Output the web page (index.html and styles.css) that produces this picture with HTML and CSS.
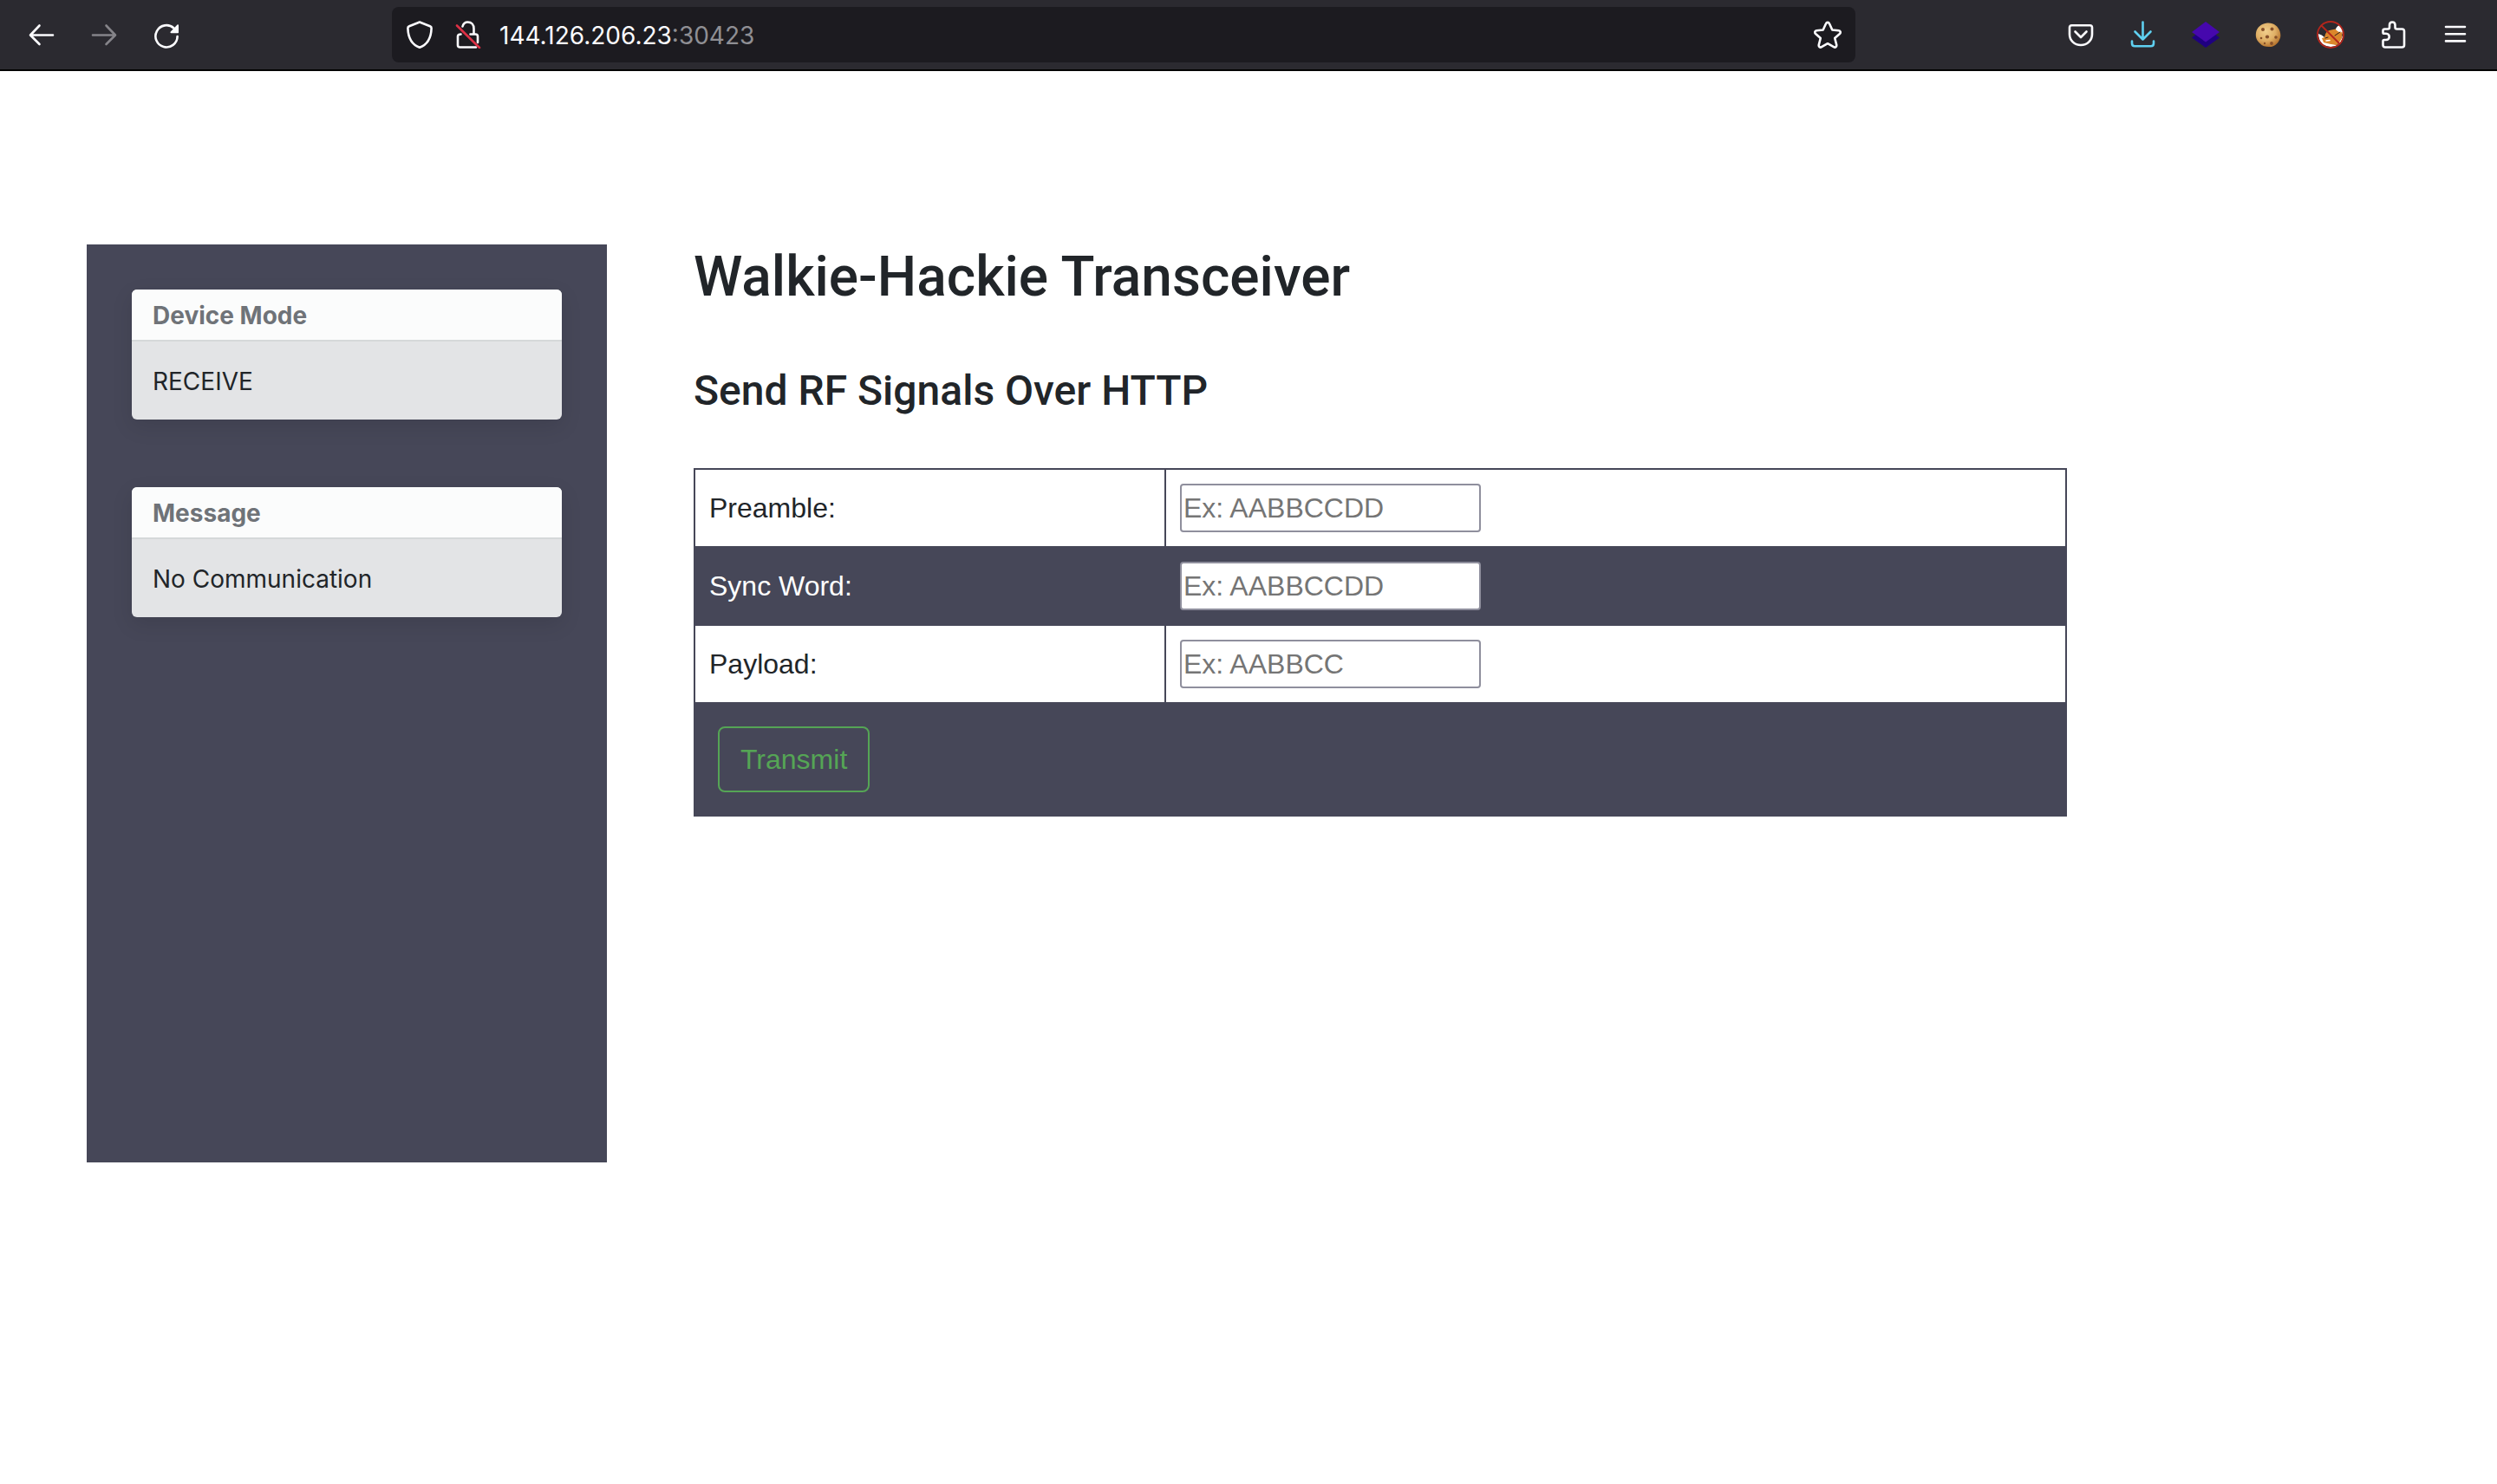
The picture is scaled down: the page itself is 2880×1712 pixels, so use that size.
FILE: index.html
```html
<!DOCTYPE html>
<html lang="en">
<head>
<meta charset="utf-8">
<meta name="viewport" content="width=device-width, initial-scale=1">
<title>Walkie-Hackie Transceiver</title>
<link rel="stylesheet" href="styles.css">
</head>
<body>
<header class="toolbar">
  <nav class="tools" aria-label="History">
    <button class="tool" type="button" aria-label="Back">
      <svg class="icon" viewBox="0 0 32 32"><path d="M29 16.500H4M13.500 5.500L3 16.500L13.500 27" /></svg>
    </button>
    <button class="tool tool-dim" type="button" aria-label="Forward">
      <svg class="icon" viewBox="0 0 32 32"><path d="M3 16.500H28M18.500 5.500L29 16.500L18.500 27" /></svg>
    </button>
    <button class="tool" type="button" aria-label="Reload">
      <svg class="icon" viewBox="0 0 32 32"><path d="M28.600 18A12.600 12.600 0 1 1 24.500 8.500" /><path class="solid" d="M30 5.200V13.500a.8.8 0 0 1-.8.800H21.500c-1.100 0-1.400-1-.7-1.700L28.500 4.600c.7-.6 1.500-.3 1.500.600z" /></svg>
    </button>
  </nav>
  <div class="address">
    <div class="site">
      <svg class="icon" viewBox="0 0 32 32"><path d="M16 1.500L28 6.200C29.200 6.700 29.700 7.500 29.600 8.700C29.300 18.500 26 27 16 30.800C6 27 2.700 18.500 2.400 8.700C2.300 7.500 2.800 6.700 4 6.200Z" /></svg>
      <svg class="icon" viewBox="0 0 32 32"><path d="M9.500 6.500C10.500 3 13 1.500 15.500 1.500C20 1.500 22.500 4.500 22.500 9V14.500M7.500 15.500Q4 15.500 4 18V28Q4 30.500 6.500 30.500H25M18.500 15.500H24.500Q27 15.500 27 18V25" /><path class="slash" d="M3 5.500L29 31" /></svg>
    </div>
    <div class="url" role="textbox" contenteditable="true" spellcheck="false" aria-label="Address"><span class="host">144.126.206.23</span>:30423</div>
    <button class="star" type="button" aria-label="Bookmark this page">
      <svg class="icon" viewBox="0 0 32 32"><path d="M14 3.300C14.800 1.400 17.200 1.400 18 3.300L21.300 10.500L28.800 11.300C30.800 11.600 31.400 13.600 29.900 15L24.200 20L26.200 27.700C26.600 29.900 24.800 31.200 23 30.200L16 26.200L9 30.200C7.200 31.200 5.400 29.900 5.800 27.700L7.800 20L2.100 15C.600 13.600 1.200 11.600 3.200 11.300L10.700 10.500Z" /></svg>
    </button>
  </div>
  <nav class="tools" aria-label="Extensions">
    <button class="tool" type="button" aria-label="Save to Pocket">
      <svg class="icon" viewBox="0 0 32 32"><path d="M5.500 5.200H26.500Q29 5.200 29 7.700V15.500C29 22.500 23.500 28 16 28C8.500 28 3 22.500 3 15.500V7.700Q3 5.200 5.500 5.200ZM9.500 12.500L16 19L22.500 12.500" /></svg>
    </button>
    <button class="tool tool-active" type="button" aria-label="Downloads">
      <svg class="icon" viewBox="0 0 32 32"><path d="M15.500 1.500V21.500M6.500 12.500L15.500 21.500L24.500 12.500M3 23.500V26Q3 29.200 6.200 29.200H24.800Q28 29.200 28 26V23.500" /></svg>
    </button>
    <button class="tool" type="button" aria-label="Wappalyzer">
      <svg class="icon" viewBox="0 0 32 32"><path fill="#1f0080" stroke="none" d="M0 19.500L5 15.500H27L32 19.500L16 31Z" /><path fill="#4608ad" stroke="none" d="M16 1L32 13L16 24.500L0 13Z" /></svg>
    </button>
    <button class="tool" type="button" aria-label="Cookie editor">
      <svg class="icon" viewBox="0 0 32 32">
        <defs><radialGradient id="cookie" cx=".4" cy=".35" r=".65"><stop offset="0" stop-color="#f2cf8c" /><stop offset=".6" stop-color="#dfaf66" /><stop offset="1" stop-color="#b97832" /></radialGradient></defs>
        <path fill="url(#cookie)" stroke="none" d="M15 2.500C22 1.800 27.500 6 29.500 12C30.500 15 31 19 29 22C27 27 22 30.500 17 30C13 30 9 29 6.500 26C3 23 1.200 19 2 14C2.800 8 8 3 15 2.500Z" />
        <g stroke="none" fill="#875029"><circle cx="10" cy="10" r="2" /><circle cx="20.500" cy="9.500" r="2" /><circle cx="15" cy="18.500" r="2.100" /><circle cx="25" cy="19" r="1.800" /><circle cx="8" cy="20" r="1.300" /><circle cx="20" cy="26" r="1.900" /><circle cx="12" cy="26" r="1.200" /></g>
      </svg>
    </button>
    <button class="tool" type="button" aria-label="FoxyProxy, disabled">
      <svg class="icon" viewBox="0 0 32 32">
        <path fill="#fff" stroke="none" d="M2 15Q6 16 9 19L12 25L24 28L30 17Q30 22 26 27Q16 33 7 27Q2 22 2 15ZM26 5Q21 8 22 12L29.500 15Q31 9 26 5Z" />
        <path fill="#db872c" stroke="none" d="M9 19Q10 11 17 10.500L21.500 9.500Q25 14 29.500 13Q30 20 26 25L23 28Q15 27 8 25L6 20Z" />
        <path stroke="#30201a" stroke-width="1" d="M10 20L13 19M21 17L27 13" />
        <path stroke="#fff" stroke-width="1.600" d="M11 23L15 22.500" />
        <circle cx="16" cy="16" r="15" stroke="#b3261c" stroke-width="1.800" />
        <path stroke="#b3261c" stroke-width="2" d="M5.500 5.500L26.500 26.500" />
      </svg>
    </button>
    <button class="tool" type="button" aria-label="Extensions">
      <svg class="icon" viewBox="0 0 32 32"><path d="M6.500 9.500H10Q12 9.500 12 7.500V5C12 .300 18.500 .300 18.500 5V7.500Q18.500 9.500 20.500 9.500H26.500Q29 9.500 29 12V28Q29 30.500 26.500 30.500H7Q4.500 30.500 4.500 28V23.500Q4.500 22 6 22H8C13 22 13 14.800 8 14.800H6Q4.500 14.800 4.500 13.500V11.500Q4.500 9.500 6.500 9.500Z" /></svg>
    </button>
    <button class="tool" type="button" aria-label="Menu">
      <svg class="icon" viewBox="0 0 32 32"><path d="M5 7H27M5 15.200H27M5 23.400H27" /></svg>
    </button>
  </nav>
</header>
<main class="page">
  <aside class="sidebar">
    <section class="card">
      <h2 class="card-title">Device Mode</h2>
      <p class="card-text">RECEIVE</p>
    </section>
    <section class="card">
      <h2 class="card-title">Message</h2>
      <p class="card-text">No Communication</p>
    </section>
  </aside>
  <div class="content">
    <h1 class="title">Walkie-Hackie Transceiver</h1>
    <h2 class="subtitle">Send RF Signals Over HTTP</h2>
    <form>
      <table class="fields">
        <tr><td class="name"><label for="pa">Preamble:</label></td><td><input class="field" type="text" id="pa" placeholder="Ex: AABBCCDD"></td></tr>
        <tr class="dark"><td class="name"><label for="sw">Sync Word:</label></td><td><input class="field" type="text" id="sw" placeholder="Ex: AABBCCDD"></td></tr>
        <tr><td class="name"><label for="pl">Payload:</label></td><td><input class="field" type="text" id="pl" placeholder="Ex: AABBCC"></td></tr>
        <tr class="dark"><td colspan="2"><button class="transmit" type="submit">Transmit</button></td></tr>
      </table>
    </form>
  </div>
</main>
</body>
</html>
```
FILE: styles.css
```css
* { box-sizing: border-box; }

body {
  margin: 0;
  background: #fff;
  color: #212529;
  font-family: Inter, "Liberation Sans", sans-serif;
  font-size: 28px;
  line-height: 42px;
}

/* Browser toolbar */
.toolbar {
  display: flex;
  align-items: center;
  gap: 224px;
  height: 82px;
  padding: 0 12px;
  background: #2b2a30;
  border-bottom: 2px solid #000;
}

.tools { display: flex; }

.tool, .star {
  display: flex;
  align-items: center;
  justify-content: center;
  width: 72px;
  height: 64px;
  padding: 0;
  border: 0;
  background: none;
  color: #fbfbfe;
}

.star { width: 32px; }
.tool-dim { color: #858489; }
.tool-active { color: #5fd0f0; }

.icon {
  flex: none;
  width: 32px;
  height: 32px;
  fill: none;
  stroke: currentColor;
  stroke-width: 2.6;
  stroke-linecap: round;
  stroke-linejoin: round;
}

.icon .solid { fill: currentColor; stroke: none; }
.icon .slash { stroke: #dc3045; }

.address {
  display: flex;
  flex: 1;
  align-items: center;
  gap: 20px;
  height: 64px;
  padding: 0 16px;
  border-radius: 8px;
  background: #1c1b20;
  color: #fbfbfe;
}

.site {
  display: flex;
  gap: 24px;
}

.url {
  flex: 1;
  padding-top: 2px;
  color: #8f8f94;
}

.host { color: #fbfbfe; }

/* Page */
.page {
  display: flex;
  align-items: flex-start;
  gap: 100px;
  padding: 200px 100px;
}

.sidebar {
  display: flex;
  flex: none;
  flex-direction: column;
  gap: 78px;
  width: 600px;
  min-height: 1059px;
  padding: 52px;
  background: #464758;
}

.card {
  border-radius: 6px;
  overflow: hidden;
  background: #e3e4e6;
  box-shadow: 0 8px 24px rgba(0, 0, 0, 0.1);
}

.card-title {
  margin: 0;
  padding: 9px 24px 7px;
  border-bottom: 2px solid #d5d8d9;
  background: #fbfcfc;
  color: #6f7378;
  font-size: 28px;
  font-weight: 700;
}

.card-text {
  margin: 0;
  padding: 25px 24px 23px;
}

.content { flex: 1; }

.title, .subtitle {
  font-family: Roboto, Inter, sans-serif;
  font-weight: 500;
}

.title {
  margin: 0 0 64px;
  font-size: 64px;
  line-height: 76px;
}

.subtitle {
  margin: 0 0 60px;
  font-size: 48px;
  line-height: 58px;
}

.fields {
  width: 80%;
  border-collapse: collapse;
  font-family: "Liberation Sans", Arial, sans-serif;
  font-size: 32px;
  line-height: 48px;
}

.fields td {
  padding: 16px;
  border: 2px solid #464758;
}

.fields .name { width: 543px; }

.dark {
  background: #464758;
  color: #fff;
}

.field {
  display: block;
  width: 347px;
  height: 56px;
  padding: 2px;
  border: 2px solid #8f8f9d;
  border-radius: 4px;
  background: #fff;
  font: inherit;
}

.field::placeholder { color: #757575; opacity: 1; }

.transmit {
  display: block;
  margin: 10px;
  padding: 12px 24px;
  border: 2px solid #55a555;
  border-radius: 8px;
  background: transparent;
  color: #55a555;
  font: inherit;
}
```
